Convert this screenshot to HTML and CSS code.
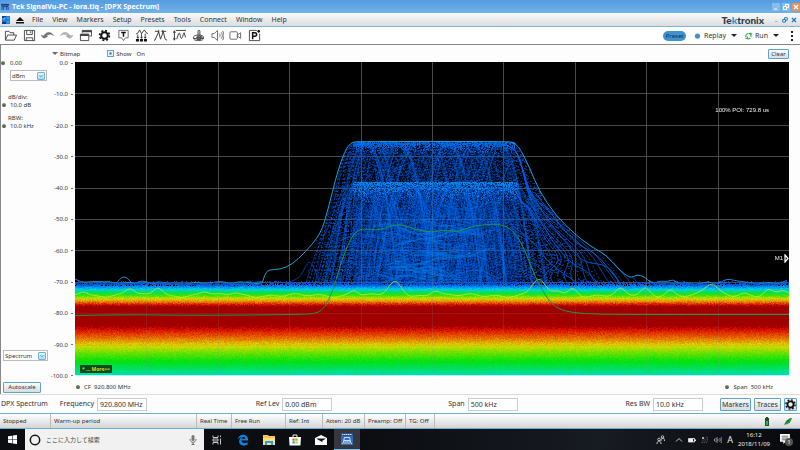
FILE: index.html
```
<!DOCTYPE html>
<html lang="en">
<head>
    <meta charset="UTF-8">
    <meta name="viewport" content="width=device-width, initial-scale=1.0">
    <title>Tek SignalVu-PC - lora.tiq - [DPX Spectrum]</title>
    <link rel="stylesheet" href="styles.css">
</head>
<body>
    <header class="title-bar">
        <svg class="title-icon" viewBox="0 0 9 9"><path d="M0 1h9v2H0z" fill="#1c3f86"/><path d="M1 8V4h7v4M3 4v4M6 4v4" stroke="#1c3f86" fill="none"/></svg>
        <h1>Tek SignalVu-PC - lora.tiq - [DPX Spectrum]</h1>
        <div class="window-buttons">
            <button aria-label="Minimize"><svg viewBox="0 0 8 8"><path d="M2 6h3" stroke="#fff"/></svg></button>
            <button aria-label="Restore"><svg viewBox="0 0 8 8"><path d="M3.500 3V1.500h3v3H5M1.500 3.500h3v3h-3z" stroke="#fff" fill="none"/></svg></button>
            <button class="close" aria-label="Close"><svg viewBox="0 0 8 8"><path d="M2 2l4 4M6 2L2 6" stroke="#fff" stroke-width="1.300"/></svg></button>
        </div>
    </header>

    <nav class="menu-bar">
        <svg class="menu-logo" viewBox="0 0 8 8"><path d="M0 0h8v8H0z" fill="#123a8c"/><path d="M4 0h4v8H4z" fill="#1683dc"/><path d="M1 6V2l1 2 1-3v5M5 2h2M5 6h2" stroke="#7fd0ff" stroke-width=".7" fill="none"/></svg>
        <svg class="menu-eject" viewBox="0 0 8 8"><path d="M4 1l4 4H0zM0 6h8v1.500H0z" fill="#111"/></svg>
        <a href="#">File</a>
        <a href="#">View</a>
        <a href="#">Markers</a>
        <a href="#">Setup</a>
        <a href="#">Presets</a>
        <a href="#">Tools</a>
        <a href="#">Connect</a>
        <a href="#">Window</a>
        <a href="#">Help</a>
        <span class="brand">Te<span class="brand-k">k</span>tronix</span>
        <div class="child-buttons">
            <button aria-label="Minimize view"><svg viewBox="0 0 6 6"><path d="M2 4.500h2.500" stroke="#8fbde0"/></svg></button>
            <button aria-label="Restore view"><svg viewBox="0 0 6 6"><path d="M2.500 2V.7h2.800v2.600H4M.7 2.500h2.800v2.600H.7z" stroke="#2c83c4" fill="none"/></svg></button>
            <button aria-label="Close view"><svg viewBox="0 0 6 6"><path d="M1 1l4 4M5 1L1 5" stroke="#1f7fc8" stroke-width="1.400"/></svg></button>
        </div>
    </nav>

    <div class="toolbar">
        <div class="tools">
            <button aria-label="Open"><svg viewBox="0 0 14 14"><path d="M1.500 12V2.500h4l1 1.500h4v2.500M1.500 12l2.500-5.500h9.500L11 12z"/></svg></button>
            <button aria-label="Save"><svg viewBox="0 0 14 14"><path d="M1.500 1.500h11v11h-11zM4 1.500v4.500h6V1.500M3.500 12.500v-3h7v3M8 2.500v2"/></svg></button>
            <button aria-label="Undo"><svg viewBox="0 0 14 14"><path d="M0 7l3 3 4-2zM3 8C5 2.500 11 2.500 13.500 7 11 5 7 5 5.500 8z" fill="#777" stroke="#555" stroke-width=".5"/></svg></button>
            <button aria-label="Redo"><svg viewBox="0 0 14 14"><path d="M14 7l-3 3-4-2zM11 8C9 2.500 3 2.500.5 7 3 5 7 5 8.500 8z" fill="#bbb" stroke="#888" stroke-width=".5"/></svg></button>
            <button aria-label="Displays"><svg viewBox="0 0 14 14"><path d="M3.500 4V1.500h10v6H11M1.500 5.500h9v7h-9z"/><path d="M3.500 2.500h10M1.500 6.500h9" stroke-width="2"/></svg></button>
            <button aria-label="Settings"><svg viewBox="0 0 14 14"><circle cx="7" cy="7" r="3.600" stroke="#111" stroke-width="2.200"/><circle cx="7" cy="7" r="5.300" stroke="#111" stroke-width="1.800" stroke-dasharray="2.100 2.060"/></svg></button>
            <button aria-label="Trigger"><svg viewBox="0 0 14 14"><path d="M2 1.500h10v8H9l-2 3-2-3H2z" stroke-width=".8"/><path d="M4.500 3.700h5M7 3.500v4.800" stroke="#111" stroke-width="1.600"/></svg></button>
            <button aria-label="Acquire"><svg viewBox="0 0 14 14"><path d="M1 5.500l2-1L5 1l2 4 3-4 2 3 2 1M3 6v4M7 5v5M11 5v5M2 8.500l1 1.500 1-1.500M6 8.500L7 10l1-1.500M10 8.500l1 1.500 1-1.500" stroke="#222" stroke-width=".9"/><path d="M1 12.200h12" stroke="#111" stroke-width="2.600" stroke-dasharray="3.300 1"/></svg></button>
            <button aria-label="Analysis"><svg viewBox="0 0 14 14"><path d="M0 12h1l4-9 2 8 3-8 2 8 2 1M1 2.500h4M8 2.500h5M5 1v3M9.500 1v3" stroke="#333"/></svg></button>
            <button aria-label="Amplitude"><svg viewBox="0 0 14 14"><path d="M1.500 2v10M.5 4l1-2 1 2M.5 10l1 2 1-2M3 1.500h11M4 11l2-6c1-1.500 1.500 0 2 3s2 3 3-2l1-2 1.500 5" stroke="#333"/></svg></button>
            <button aria-label="Touch"><svg viewBox="0 0 14 14"><ellipse cx="7" cy="9.500" rx="5.500" ry="3"/><path d="M2 10c3 1 7 1 10 0M6.500 9V2.500c0-1.500 2-1.500 2 0V8l3 1" stroke="#333"/><path d="M5 8.500h5l-1 3H6z" fill="#666"/></svg></button>
            <button aria-label="Audio"><svg viewBox="0 0 14 14"><path d="M1 5h2.500L7 1.500v11L3.500 9H1zM9 5c1 1 1 3 0 4M10.800 3.500c2 2 2 5 0 7M12.500 2c2 3 2 7 0 10" stroke="#666"/></svg></button>
            <button aria-label="Record"><svg viewBox="0 0 14 14"><rect x="1" y="3" width="8" height="8" rx="1" stroke="#666"/><path d="M9 6.500l3.500-2.500v6L9 7.500z" stroke="#666"/></svg></button>
            <button aria-label="Preset options"><svg viewBox="0 0 14 14"><path d="M9.500 1.500h-8v11h11V5"/><path d="M5 11V4h2.200c2.800 0 2.800 3.700 0 3.700H5M11.500 1v3M10 2.500h3" stroke="#111" stroke-width="1.600"/></svg></button>
        </div>
        <div class="run-controls">
            <button class="preset">Preset</button>
            <button class="action"><svg viewBox="0 0 8 8"><circle cx="4" cy="4" r="3" fill="#3e93d3"/></svg>Replay<i class="caret"></i></button>
            <button class="action"><svg viewBox="0 0 8 8"><path d="M1.300 5.500A3 3 0 0 1 4 1.200M4.500 1.200A3 3 0 0 1 6.800 5M6 6.500A3 3 0 0 1 2 6.300M.5 6.800h2.300V4.500M5.200 1H7v1.800" stroke="#2ba84a" fill="none" stroke-width="1.200"/></svg>Run<i class="caret"></i></button>
            <button class="more" aria-label="More"><svg viewBox="0 0 4 12"><path d="M1 1h2v2H1zM1 5h2v2H1zM1 9h2v2H1z" fill="#222"/></svg></button>
        </div>
    </div>

    <main class="view">
        <aside class="sidebar">
            <div class="ref-level"><i class="knob"></i><span>0.00</span></div>
            <div class="dropdown unit"><select aria-label="Unit"><option>dBm</option></select><svg viewBox="0 0 8 8"><path d="M2 3l2 2 2-2" fill="none" stroke="#2b6b96"/></svg></div>
            <div class="param"><span>dB/div:</span><i class="knob"></i><b>10.0 dB</b></div>
            <div class="param"><span>RBW:</span><i class="knob"></i><b>10.0 kHz</b></div>
            <div class="dropdown trace"><select aria-label="View type"><option>Spectrum</option></select><svg viewBox="0 0 8 8"><path d="M2 3l2 2 2-2" fill="none" stroke="#2b6b96"/></svg></div>
            <button class="win-button autoscale">Autoscale</button>
        </aside>

        <section class="display">
            <div class="display-head">
                <i class="fold"></i>
                <span class="bitmap">Bitmap</span>
                <input type="checkbox" id="show" checked>
                <label for="show">Show</label>
                <span class="state">On</span>
                <button class="win-button clear">Clear</button>
            </div>
            <div class="axis">
                <span>0.0</span><span>-10.0</span><span>-20.0</span><span>-30.0</span><span>-40.0</span><span>-50.0</span><span>-60.0</span><span>-70.0</span><span>-80.0</span><span>-90.0</span><span>-100.0</span>
            </div>
            <div class="plot">
                <canvas id="dpx" width="714" height="314"></canvas>
                <span class="poi">100% POI: 729.8 us</span>
                <span class="marker">M1<svg viewBox="0 0 5 9"><path d="M1 1l3 3.500L1 8z" fill="none" stroke="#fff" stroke-width="1.200"/></svg></span>
                <button class="more-traces">* ... More&gt;&gt;</button>
            </div>
            <div class="display-foot">
                <span><i class="knob"></i>CF&nbsp; 920.800 MHz</span>
                <span><i class="knob"></i>Span&nbsp; 500 kHz</span>
            </div>
        </section>
    </main>

    <form class="settings">
        <div class="field"><span class="view-name">DPX Spectrum</span><label for="freq">Frequency</label><input type="text" id="freq" value="920.800 MHz"></div>
        <div class="field"><label for="ref">Ref Lev</label><input type="text" id="ref" value="0.00 dBm"></div>
        <div class="field"><label for="span">Span</label><input type="text" id="span" value="500 kHz"></div>
        <div class="field"><label for="rbw">Res BW</label><input type="text" id="rbw" value="10.0 kHz"></div>
        <div class="settings-buttons">
            <button type="button" class="win-button">Markers</button>
            <button type="button" class="win-button">Traces</button>
            <button type="button" class="win-button gear" aria-label="Settings"><svg viewBox="0 0 14 14" fill="none"><circle cx="7" cy="7" r="3.900" stroke="#111" stroke-width="2.300"/><circle cx="7" cy="7" r="5.900" stroke="#111" stroke-width="1.800" stroke-dasharray="2.300 2.330"/></svg></button>
        </div>
    </form>

    <div class="status-bar">
        <span>Stopped</span><span>Warm-up period</span><span>Real Time</span><span>Free Run</span><span>Ref: Int</span><span>Atten: 20 dB</span><span>Preamp: Off</span><span>TG: Off</span>
        <div class="status-icons">
            <svg viewBox="0 0 8 9"><path d="M3 0h2v1h1v8H2V1h1z" fill="#264a2b"/><path d="M3 4h2v4H3z" fill="#35b04b"/></svg>
            <svg viewBox="0 0 8 9"><path d="M0 8l2-4 4-3h2L7 4 4 7z" fill="#3c9a48"/><path d="M1 7l5-5M3 3l3 3" stroke="#1c6530" stroke-width=".8"/></svg>
        </div>
    </div>

    <footer class="taskbar">
        <button class="start" aria-label="Start"><svg viewBox="0 0 9 9"><path d="M0 1.300l4-.6v3.500H0zM4.600.6L9 0v4.200H4.600zM0 4.800h4v3.500l-4-.6zM4.600 4.800H9V9l-4.400-.6z" fill="#fff"/></svg></button>
        <div class="search">
            <svg class="cortana" viewBox="0 0 12 12"><circle cx="6" cy="6" r="4.700" fill="none" stroke="#111" stroke-width="1.500"/></svg>
            <input type="text" aria-label="検索" placeholder="ここに入力して検索">
            <svg class="mic" viewBox="0 0 8 10"><rect x="2.500" y="0" width="3" height="6" rx="1.500" fill="#777"/><path d="M1 4c0 4.500 6 4.500 6 0M4 7.500V10M2.500 9.500h3" fill="none" stroke="#555" stroke-width=".8"/></svg>
        </div>
        <button class="app" aria-label="Task view"><svg viewBox="0 0 12 12"><path d="M2 1.500v2h5v-2M2 10.500v-2h5v2M2 5h5v2H2zM9.500 1.500v1.500M9.500 4.500v6" fill="none" stroke="#ddd" stroke-width=".9"/></svg></button>
        <button class="app" aria-label="Edge"><svg viewBox="0 0 12 12"><path d="M1 5.500C1.500 2 4 .8 6.200.8c3 0 5 2.200 5 5.700H4.500c.2 3 4 3.200 6.200 1.800v2.300C6.500 13 1.200 11.200 2.200 6.500 2.600 5 3.500 4 5 3.300 3.500 3.400 2 4 1 5.500zm3.600-.8h3.700C8.300 2.500 5 2.500 4.600 4.700z" fill="#0b84e0"/></svg></button>
        <button class="app" aria-label="Explorer"><svg viewBox="0 0 12 12"><path d="M0 1h5l1 1h6v9H0z" fill="#f2c84b"/><path d="M0 4h12v7H0z" fill="#fbe08a"/><path d="M2 11V7h8v4H8V9H4v2z" fill="#2d9fe0"/></svg></button>
        <button class="app" aria-label="Store"><svg viewBox="0 0 12 12"><path d="M4 3V1h4v2" fill="none" stroke="#eee"/><path d="M0 3h12l-.5 8.500H.5z" fill="#fff"/><path d="M3.500 4.500h2.200v2.200H3.500z" fill="#f25022"/><path d="M6.300 4.500h2.200v2.200H6.300z" fill="#7fba00"/><path d="M3.500 7.300h2.200v2.200H3.500z" fill="#00a4ef"/><path d="M6.300 7.300h2.200v2.200H6.300z" fill="#ffb900"/></svg></button>
        <button class="app" aria-label="Mail"><svg viewBox="0 0 12 12"><path d="M0 4l6-3 6 3v7H0z" fill="#fff"/><path d="M1 4.500h10L7 7l1 1.500z" fill="#111"/></svg></button>
        <button class="app active" aria-label="SignalVu"><svg viewBox="0 0 12 12"><path d="M0 0h12v12H0z" fill="#376cb4"/><path d="M0 0h12v3H0z" fill="#24529a"/><path d="M1 1.500h10" stroke="#cfe2fa" stroke-dasharray="1.500 .5"/><path d="M1 10.500h1l1.500-6h5l1.500 6h1M4 11V8M6 11V7M8 11V8M3 7.500h6" fill="none" stroke="#d5e7fa" stroke-width=".9"/></svg></button>
        <div class="tray">
            <svg class="people" viewBox="0 0 9 10"><path d="M1 9c0-4 4-4 4 0M5 6c0-4 3.500-4 3.500 0" fill="none" stroke="#ddd" stroke-width=".9"/><circle cx="3" cy="4.500" r="1.300" fill="none" stroke="#ddd" stroke-width=".8"/><circle cx="6.500" cy="2" r="1.300" fill="none" stroke="#ddd" stroke-width=".8"/></svg>
            <svg viewBox="0 0 8 8"><path d="M1 5.500l3-3 3 3" fill="none" stroke="#ddd" stroke-width=".9"/></svg>
            <svg viewBox="0 0 8 8"><path d="M.5 2.500h6v3.500h-6z" fill="#eee" stroke="#eee" stroke-width=".7"/><path d="M7.500 3.500V5" stroke="#eee"/><path d="M5 3h1v2.500H5z" fill="#222"/></svg>
            <svg viewBox="0 0 8 8"><path d="M1 1l2 2M3 1L1 3" stroke="#ccc" stroke-width=".8"/><path d="M1 7C2 4 4 2 7 1M3 7c.5-2 2-3 4-4M5 7c.5-1 1-1.500 2-2" fill="none" stroke="#888" stroke-width=".7" stroke-dasharray="1 .6"/></svg>
            <svg viewBox="0 0 8 8"><path d="M.5 3h1L3 1.500v5L1.500 5h-1zM4 3v2M5.500 2c1 1 1 3 0 4M7 1c1.300 2 1.300 4 0 6" fill="none" stroke="#bbb" stroke-width=".7"/></svg>
            <span class="ime">A</span>
            <time class="clock"><span>16:12</span><span>2018/11/09</span></time>
            <div class="notice">
                <svg viewBox="0 0 10 10"><path d="M0 0h9v7H5L3 9V7H0z" fill="#fff"/><path d="M1.500 2h6M1.500 3.700h6M1.500 5.300h4" stroke="#444" stroke-width=".7"/></svg>
                <span class="badge">1</span>
            </div>
        </div>
    </footer>

    <script src="plot.js"></script>
</body>
</html>
```
FILE: styles.css
```
* {
    box-sizing: border-box;
}

body {
    margin: 0;
    min-height: 100vh;
    display: flex;
    flex-direction: column;
    background-color: #fdfdfd;
    font-family: "Noto Sans", "Noto Sans CJK JP", sans-serif;
    font-size: 7px;
    line-height: 10px;
    color: #333;
}

button, input, select {
    font: inherit;
    color: inherit;
    margin: 0;
    padding: 0;
    border: none;
    background: none;
}

svg {
    display: block;
}

/* Title bar */
.title-bar {
    display: flex;
    align-items: center;
    height: 13px;
    padding-left: 1px;
    background: linear-gradient(#559de0, #70b1ea);
}

.title-icon {
    width: 8px;
    height: 8px;
    margin-right: 3px;
}

h1 {
    margin: 0;
    font-family: "Open Sans", sans-serif;
    font-size: 7px;
    font-weight: bold;
    color: #fff;
}

.window-buttons {
    display: flex;
    gap: 2px;
    margin-left: auto;
}

.window-buttons button {
    width: 8px;
    height: 8px;
    border-radius: 1px;
    background-color: #86bdf0;
}

.window-buttons .close {
    background-color: #e8935c;
}

/* Menu */
.menu-bar {
    display: flex;
    align-items: center;
    height: 14px;
    padding: 0 3px 0 2px;
    gap: 9px;
    border-bottom: 1px solid #7fb6d3;
    background: linear-gradient(#fafafa, #dcdde0);
}

.menu-bar a {
    color: #333;
    text-decoration: none;
}

.menu-logo {
    width: 8px;
    height: 8px;
    margin-right: -3px;
}

.menu-eject {
    width: 8px;
    height: 8px;
    margin-right: -1px;
}

.brand {
    margin-left: auto;
    font-family: Lato, sans-serif;
    font-size: 10px;
    font-weight: 900;
    color: #333c46;
}

.brand-k {
    color: #1d9cc8;
}

.child-buttons {
    display: flex;
    gap: 3px;
}

.child-buttons button {
    width: 6px;
    height: 6px;
}

/* Toolbar */
.toolbar {
    display: flex;
    align-items: center;
    justify-content: space-between;
    height: 18px;
    border-bottom: 1px solid #888;
    background-color: #fff;
}

.tools {
    display: grid;
    grid-template-columns: repeat(14, 1fr);
    width: 264px;
    padding-left: 1px;
    justify-items: center;
}

.tools svg {
    width: 13px;
    height: 13px;
    fill: none;
    stroke: #444;
}

.run-controls {
    display: flex;
    align-items: center;
    gap: 8px;
    padding-right: 6px;
}

.preset {
    width: 23px;
    height: 10px;
    border-radius: 5px;
    background-color: #3d93d0;
    font-size: 6px;
    line-height: 10px;
    color: #14304c;
}

.action {
    display: flex;
    align-items: center;
    gap: 3px;
}

.action svg {
    width: 7px;
    height: 8px;
}

.caret {
    margin-left: 2px;
    border: 3px solid transparent;
    border-top-color: #222;
    border-bottom: none;
}

.more {
    margin-left: 3px;
}

.more svg {
    width: 4px;
    height: 12px;
}

/* Spectrum view */
.view {
    flex: 1;
    display: flex;
    border-left: 1px solid #888;
    font-size: 6px;
}

.sidebar {
    display: flex;
    flex-direction: column;
    align-items: flex-start;
    width: 50px;
    padding: 13px 0 1px;
}

.knob {
    width: 4px;
    height: 4px;
    border-radius: 2px;
    background: linear-gradient(#6fa06f, #444);
}

.ref-level {
    display: flex;
    align-items: center;
    gap: 5px;
}

.dropdown {
    display: flex;
    align-items: center;
    height: 11px;
    padding-right: 1px;
    border: 1px solid #bbb;
    background-color: #fff;
}

.dropdown select {
    appearance: none;
    flex: 1;
    padding-left: 1px;
}

.dropdown svg {
    width: 8px;
    height: 8px;
    border: 1px solid #6bb3db;
    border-radius: 1px;
    background: linear-gradient(#e9f7ff, #a8dcf5);
    pointer-events: none;
}

.unit {
    width: 37px;
    margin: 2px 0 12px 9px;
}

.trace {
    width: 45px;
    margin: auto 0 21px 2px;
}

.param {
    display: grid;
    grid-template-columns: 4px 1fr;
    column-gap: 4px;
    align-items: center;
    line-height: 8px;
    margin: 0 0 5px 1px;
}

.param span {
    grid-column: 1 / -1;
    padding-left: 6px;
}

.param b {
    font-weight: normal;
}

.win-button {
    border: 1px solid #5fa3c7;
    border-radius: 1px;
    background: linear-gradient(#fafafa, #d9dde0);
}

.autoscale {
    width: 38px;
    height: 11px;
    line-height: 9px;
    margin-left: 2px;
}

.display {
    flex: 1;
    display: grid;
    grid-template-columns: 24px 1fr;
    grid-template-rows: 17px 1fr 18px;
    padding-right: 11px;
}

.display-head {
    grid-column: 1 / -1;
    display: flex;
    align-items: center;
    padding-left: 1px;
}

.fold {
    border: 3px solid transparent;
    border-top-color: #667;
    border-bottom: none;
}

.bitmap {
    margin: 0 27px 0 2px;
}

.display-head input {
    appearance: none;
    width: 7px;
    height: 7px;
    margin-right: 2px;
    border: 1px solid #5fa3c7;
    background: radial-gradient(#3788b8 20%, #e6f4fc 50%);
}

.state {
    margin-left: 5px;
}

.clear {
    width: 21px;
    height: 10px;
    line-height: 8px;
    margin-left: auto;
}

.axis {
    display: flex;
    flex-direction: column;
    justify-content: space-between;
    margin: -4px 0 -5px -5px;
}

.axis span {
    display: flex;
    justify-content: flex-end;
    align-items: center;
    gap: 3px;
    padding-right: 2px;
}

.axis span::after {
    content: "";
    width: 2px;
    height: 1px;
    background-color: #777;
}

.plot {
    position: relative;
    background-color: #000;
}

.plot canvas {
    display: block;
    width: 100%;
    height: 100%;
}

.poi {
    position: absolute;
    top: 14%;
    right: 20px;
    font-family: "Liberation Sans", Arial, sans-serif;
    line-height: 8px;
    color: #eee;
}

.marker {
    position: absolute;
    top: 61%;
    right: 0;
    display: flex;
    align-items: center;
    gap: 1px;
    font-family: "Liberation Sans", Arial, sans-serif;
    line-height: 8px;
    color: #eee;
}

.marker svg {
    width: 5px;
    height: 9px;
}

.more-traces {
    position: absolute;
    left: 5px;
    bottom: 3px;
    width: 32px;
    height: 8px;
    background-color: #0b4a1c;
    font-size: 5px;
    font-weight: bold;
    line-height: 8px;
    white-space: nowrap;
    color: #d5dc2a;
}

.display-foot {
    grid-column: 2;
    display: flex;
    justify-content: space-between;
    align-items: center;
    padding: 4px 16px 0 1px;
}

.display-foot span {
    display: flex;
    align-items: center;
    gap: 4px;
}

/* Settings */
.settings {
    display: grid;
    grid-template-columns: 147px 1fr 1fr 1fr 94px;
    align-items: center;
    height: 19px;
    padding-right: 3px;
    border-top: 1px solid #ddd;
}

.field {
    display: flex;
    align-items: center;
    justify-content: flex-end;
    gap: 3px;
}

.view-name {
    margin: 0 auto 0 1px;
}

.field input {
    width: 50px;
    height: 13px;
    padding-left: 2px;
    border: 1px solid #ccc;
    background-color: #fff;
}

.settings-buttons {
    display: flex;
    justify-content: flex-end;
    gap: 3px;
}

.settings-buttons button {
    min-width: 27px;
    height: 13px;
    line-height: 11px;
    padding: 0 1px;
}

.settings-buttons .gear {
    min-width: 13px;
    padding: 0;
}

.gear svg {
    width: 11px;
    height: 11px;
}

/* Status bar */
.status-bar {
    display: grid;
    grid-template-columns: 51px 146px 35px 54px 37px 42px 41px 29px 1fr;
    height: 16px;
    border-top: 1px solid #6aaed2;
    border-bottom: 1px solid #6aaed2;
    background: linear-gradient(#fff, #d4d5d8);
    font-size: 6px;
    line-height: 14px;
}

.status-bar span {
    padding-left: 3px;
    border-right: 1px solid #bbb;
    white-space: nowrap;
}

.status-icons {
    display: flex;
    justify-content: flex-end;
    align-items: center;
    gap: 13px;
    padding-right: 8px;
}

.status-icons svg {
    width: 8px;
    height: 9px;
}

/* Taskbar */
.taskbar {
    display: flex;
    align-items: stretch;
    height: 21px;
    background: linear-gradient(90deg, #0b0d11 45%, #171b22 75%, #08090c);
    color: #eee;
}

.taskbar button {
    display: flex;
    align-items: center;
    justify-content: center;
    width: 26px;
}

.taskbar .start {
    width: 25px;
}

.start svg {
    width: 9px;
    height: 9px;
}

.search {
    display: flex;
    align-items: center;
    width: 179px;
    padding: 0 7px 0 4px;
    background-color: #f1f1f1;
}

.search input {
    flex: 1;
    min-width: 0;
    padding-left: 5px;
    font-family: "Noto Sans CJK JP", sans-serif;
    font-size: 6px;
}

.search input::placeholder {
    color: #444;
    opacity: 1;
}

.cortana {
    width: 12px;
    height: 12px;
}

.mic {
    width: 8px;
    height: 10px;
}

.app svg {
    width: 12px;
    height: 12px;
}

.taskbar .active {
    background-color: #34383e;
    border-bottom: 1px solid #76b9ed;
}

.tray {
    display: flex;
    align-items: center;
    gap: 5px;
    margin-left: auto;
    padding-right: 9px;
}

.tray svg {
    width: 8px;
    height: 8px;
}

.tray .people {
    width: 9px;
    height: 10px;
    margin-right: 5px;
}

.ime {
    font-size: 9px;
}

.clock {
    display: flex;
    flex-direction: column;
    align-items: center;
    font-size: 6px;
    line-height: 9px;
}

.notice {
    position: relative;
    margin-left: 5px;
}

.tray .notice svg {
    width: 11px;
    height: 11px;
}

.badge {
    position: absolute;
    left: 5px;
    top: 4px;
    width: 8px;
    height: 8px;
    border-radius: 4px;
    background-color: #555;
    font-size: 6px;
    line-height: 8px;
    text-align: center;
}
```
FILE: plot.js
```
const canvas = document.getElementById('dpx');
const ctx = canvas.getContext('2d');
const W = canvas.width;
const H = canvas.height;

// Repeatable noise, so the bitmap looks the same on every load
let seed = 920800;
function rand() {
    seed = (seed * 1664525 + 1013904223) % 4294967296;
    return seed / 4294967296;
}

// Max-hold outline of the signal
const outline = [[187, 221], [190, 211], [194, 207], [205, 207], [217, 202], [230, 190], [246, 171], [253, 147], [262, 111], [270, 88], [276, 80], [282, 79], [433, 79], [439, 80], [445, 86], [455, 106], [464, 128], [480, 152], [500, 172], [516, 184], [532, 193], [543, 206], [555, 216], [562, 212], [569, 214], [576, 220]];
// Average trace
const average = [[0, 253], [50, 252], [120, 253], [225, 252], [242, 251], [250, 245], [258, 228], [265, 203], [275, 177], [282, 168], [290, 166], [301, 168], [312, 165], [325, 161], [340, 167], [357, 170], [370, 167], [383, 170], [395, 164], [420, 161], [432, 164], [441, 171], [450, 188], [460, 214], [470, 233], [480, 245], [495, 250], [525, 252], [610, 252], [714, 252]];
// Colour by level inside the noise floor
const palette = [[221, 0, 70, 220], [224, 0, 130, 240], [227, 0, 210, 225], [230, 0, 225, 80], [233, 60, 225, 0], [236, 200, 220, 0], [239, 235, 140, 0], [242, 215, 20, 0], [244, 160, 0, 0], [264, 160, 0, 0], [267, 215, 10, 0], [275, 230, 100, 0], [283, 220, 215, 0], [290, 110, 225, 0], [299, 0, 225, 15], [314, 0, 222, 190]];

function valueAt(points, x) {
    for (let i = 1; i < points.length; i++) {
        if (x <= points[i][0]) {
            const a = points[i - 1];
            const b = points[i];
            return a[1] + (b[1] - a[1]) * (x - a[0]) / (b[0] - a[0]);
        }
    }
    return 221;
}

function topAt(x) {
    return x < 187 || x > 576 ? 221 : valueAt(outline, x);
}

function paletteAt(y) {
    for (let i = 1; i < palette.length; i++) {
        if (y <= palette[i][0]) {
            const a = palette[i - 1];
            const b = palette[i];
            const t = Math.max(0, (y - a[0]) / (b[0] - a[0]));
            return [1, 2, 3].map(function (k) { return Math.round(a[k] + (b[k] - a[k]) * t); });
        }
    }
    return [0, 222, 190];
}

function dot(x, y, color) {
    ctx.fillStyle = color;
    ctx.fillRect(Math.round(x), Math.round(y), 1, 1);
}

function strokePoints(points, color) {
    ctx.strokeStyle = color;
    ctx.lineWidth = 1;
    ctx.beginPath();
    ctx.moveTo(points[0][0], points[0][1] + 0.5);
    for (let i = 1; i < points.length - 1; i++) {
        const mx = (points[i][0] + points[i + 1][0]) / 2;
        const my = (points[i][1] + points[i + 1][1]) / 2;
        ctx.quadraticCurveTo(points[i][0], points[i][1] + 0.5, mx, my + 0.5);
    }
    const last = points[points.length - 1];
    ctx.lineTo(last[0], last[1] + 0.5);
    ctx.stroke();
}

function drawGrid(color) {
    ctx.fillStyle = color;
    for (let i = 1; i < 10; i++) {
        ctx.fillRect(Math.round(W * i / 10), 0, 1, H);
        ctx.fillRect(0, Math.round(H * i / 10), W, 1);
    }
}

function drawSpeckle() {
    for (let x = 225; x < 560; x++) {
        for (let y = Math.ceil(topAt(x)); y < 226; y++) {
            let density = y < 121 ? 0.26 : 0.48;
            if (x < 282) density *= Math.max(0, (x - 226 - (221 - y) * 0.2) / 56);
            if (x > 436) density *= Math.max(0, 1 - (x - 436) / (30 + (y - 80) * 0.4));
            if (rand() < density) {
                const g = Math.round(50 + rand() * 50);
                ctx.fillStyle = 'rgba(0,' + g + ',' + Math.round(150 + rand() * 80) + ',0.6)';
                ctx.fillRect(x, y, rand() > 0.5 ? 2 : 1, 1);
            }
        }
    }
}

// One chirp snapshot: rounded peak at (cx, top) falling away on both sides
function drawArc(cx, top, half, alpha, width) {
    ctx.strokeStyle = 'rgba(0,105,240,' + alpha + ')';
    ctx.lineWidth = width || 1;
    ctx.beginPath();
    for (let d = -half; d <= half; d += 2) {
        ctx.lineTo(cx + d, top + Math.pow(Math.abs(d) / half, 2) * (224 - top));
    }
    ctx.stroke();
}

function drawSignal() {
    // Nothing is drawn above the max-hold outline
    ctx.save();
    ctx.beginPath();
    outline.forEach(function (p) { ctx.lineTo(p[0], p[1]); });
    ctx.lineTo(576, 226);
    ctx.lineTo(187, 226);
    ctx.clip();

    // Faint body behind the traces
    ctx.fillStyle = 'rgba(0,50,150,0.25)';
    ctx.fillRect(278, 80, 162, 41);
    ctx.fillStyle = 'rgba(0,60,175,0.4)';
    ctx.fillRect(278, 121, 166, 105);

    drawSpeckle();
    ctx.setLineDash([2, 1]);
    for (let i = 0; i < 60; i++) {
        drawArc(286 + rand() * 144, 81, 20 + rand() * 35, 0.4);
        drawArc(284 + rand() * 148, 122 + rand() * 6, 16 + rand() * 35, 0.4);
    }
    ctx.setLineDash([]);
    [290, 324, 373, 398, 424].forEach(function (cx) {
        drawArc(cx, 82, 34, 0.35, 2);
        drawArc(cx + 3, 82, 30, 0.5);
    });
    [284, 334, 380, 438].forEach(function (cx) {
        drawArc(cx, 122, 34, 0.35, 3);
    });

    // Slow ripples in the lower half
    for (let i = 0; i < 44; i++) {
        const base = 135 + Math.sqrt(rand()) * 86;
        const start = 268 + rand() * 105;
        const slope = rand() * 0.3 - 0.1;
        ctx.strokeStyle = 'rgba(0,125,235,0.45)';
        ctx.lineWidth = i % 4 ? 1 : 2;
        ctx.beginPath();
        for (let x = start; x < start + 60; x += 3) {
            ctx.lineTo(x, Math.min(222, base + (x - start) * slope + Math.sin(x / 9 + i) * 3));
        }
        ctx.stroke();
    }

    // Skirts on the left and right of the main lobe
    for (let i = 0; i < 15; i++) {
        ctx.setLineDash(i % 3 ? [2, 2] : [3, 1]);
        const top = i % 3 ? 82 : 122;
        strokePoints([[230 + i * 3, 224], [240 + i * 3, 190], [253 + i * 2, top + 44], [263 + i, top + 14], [272 + i, top], [282 + i, top]], 'rgba(0,90,230,0.75)');
    }
    for (let i = 0; i < 16; i++) {
        ctx.setLineDash(i % 3 === 1 ? [2, 2] : []);
        const end = 456 + i * 7;
        const top = i < 6 ? 122 : 82;
        strokePoints([[428, top], [439, top + 2], [446, top + 18], [456, 150 - i], [468 + i, 182 - i * 2], [482 + i * 3, 200 - i], [end - 4, 213], [end + 4, 224]], 'rgba(0,90,230,0.75)');
    }
    ctx.setLineDash([]);
    strokePoints([[460, 130], [475, 150], [500, 181], [520, 190], [533, 205], [546, 222]], '#0060d0');
    strokePoints([[456, 130], [470, 155], [492, 181], [507, 200], [533, 202], [546, 222]], '#0056c4');
    strokePoints([[452, 135], [475, 177], [497, 202], [512, 208], [524, 222]], '#0056c4');
    strokePoints([[440, 165], [458, 178], [473, 200], [490, 212], [505, 222]], '#0056c4');
    strokePoints([[428, 118], [431, 106], [440, 97], [449, 97], [457, 107], [466, 132]], '#0050b8');
    strokePoints([[215, 219], [224, 217], [232, 201], [235, 199], [239, 205], [245, 221]], '#003a9c');

    for (let i = 0; i < 1300; i++) {
        dot(278 + rand() * 164, 120 + rand() * rand() * 20, 'rgba(0,140,240,0.7)');
        dot(278 + rand() * 162, 80 + rand() * rand() * 12, 'rgba(0,110,235,0.7)');
    }
    for (let x = 278; x < 438; x += 2) {
        dot(x, 120 + Math.round(rand()), '#0a8fdc');
        dot(x + 1, 120, 'rgba(10,143,220,0.6)');
    }
    ctx.restore();
    strokePoints(outline, '#1c9fdc');
}

function drawNoiseFloor() {
    for (let x = 0; x < W; x++) {
        for (let y = 219; y < H; y++) {
            if (y < 224 && rand() > (y - 218) / 6) continue;
            const spread = y > 262 ? 4 : 2;
            const c = paletteAt(Math.min(314, Math.max(221, y + (rand() - 0.5) * spread)));
            dot(x, y, 'rgb(' + c.join(',') + ')');
        }
    }
    // Ragged blue fringe, away from the signal
    for (let pass = 0; pass < 3; pass++) {
        [[0, 186], [574, W]].forEach(function (range) {
            const points = [];
            for (let x = range[0]; x <= range[1]; x += 6) {
                points.push([x, 219 + pass + rand() * 3 - (rand() > 0.8 ? 3 : 0)]);
            }
            strokePoints(points, pass ? '#0058d0' : '#1687cf');
        });
    }
    strokePoints([[41, 221], [45, 216], [49, 214], [53, 216], [57, 221]], '#1687cf');
}

function drawTraces() {
    const bumps = [[8, 5], [55, 7], [83, 9], [130, 4], [160, 3], [279, 6], [320, 13], [360, 6], [463, 16], [483, 5], [498, 7], [545, 6], [570, 7], [595, 6], [636, 11], [668, 3], [693, 6], [708, 5]];
    const points = [];
    for (let x = 0; x <= W; x += 3) {
        let y = 233 + Math.sin(x / 4) + Math.sin(x / 13);
        bumps.forEach(function (b) {
            y -= b[1] * Math.exp(-Math.pow((x - b[0]) / (b[1] > 9 ? 9 : 6), 2));
        });
        points.push([x, y]);
    }
    strokePoints(points, 'rgba(205,235,50,0.75)');
    strokePoints(average, '#239348');
}

ctx.fillStyle = '#000';
ctx.fillRect(0, 0, W, H);
drawGrid('#3c3c3c');
drawSignal();
drawNoiseFloor();
drawGrid('rgba(150,150,150,0.15)');
drawTraces();
ctx.fillStyle = '#aff';
ctx.fillRect(0, H - 1, W, 1);
```
